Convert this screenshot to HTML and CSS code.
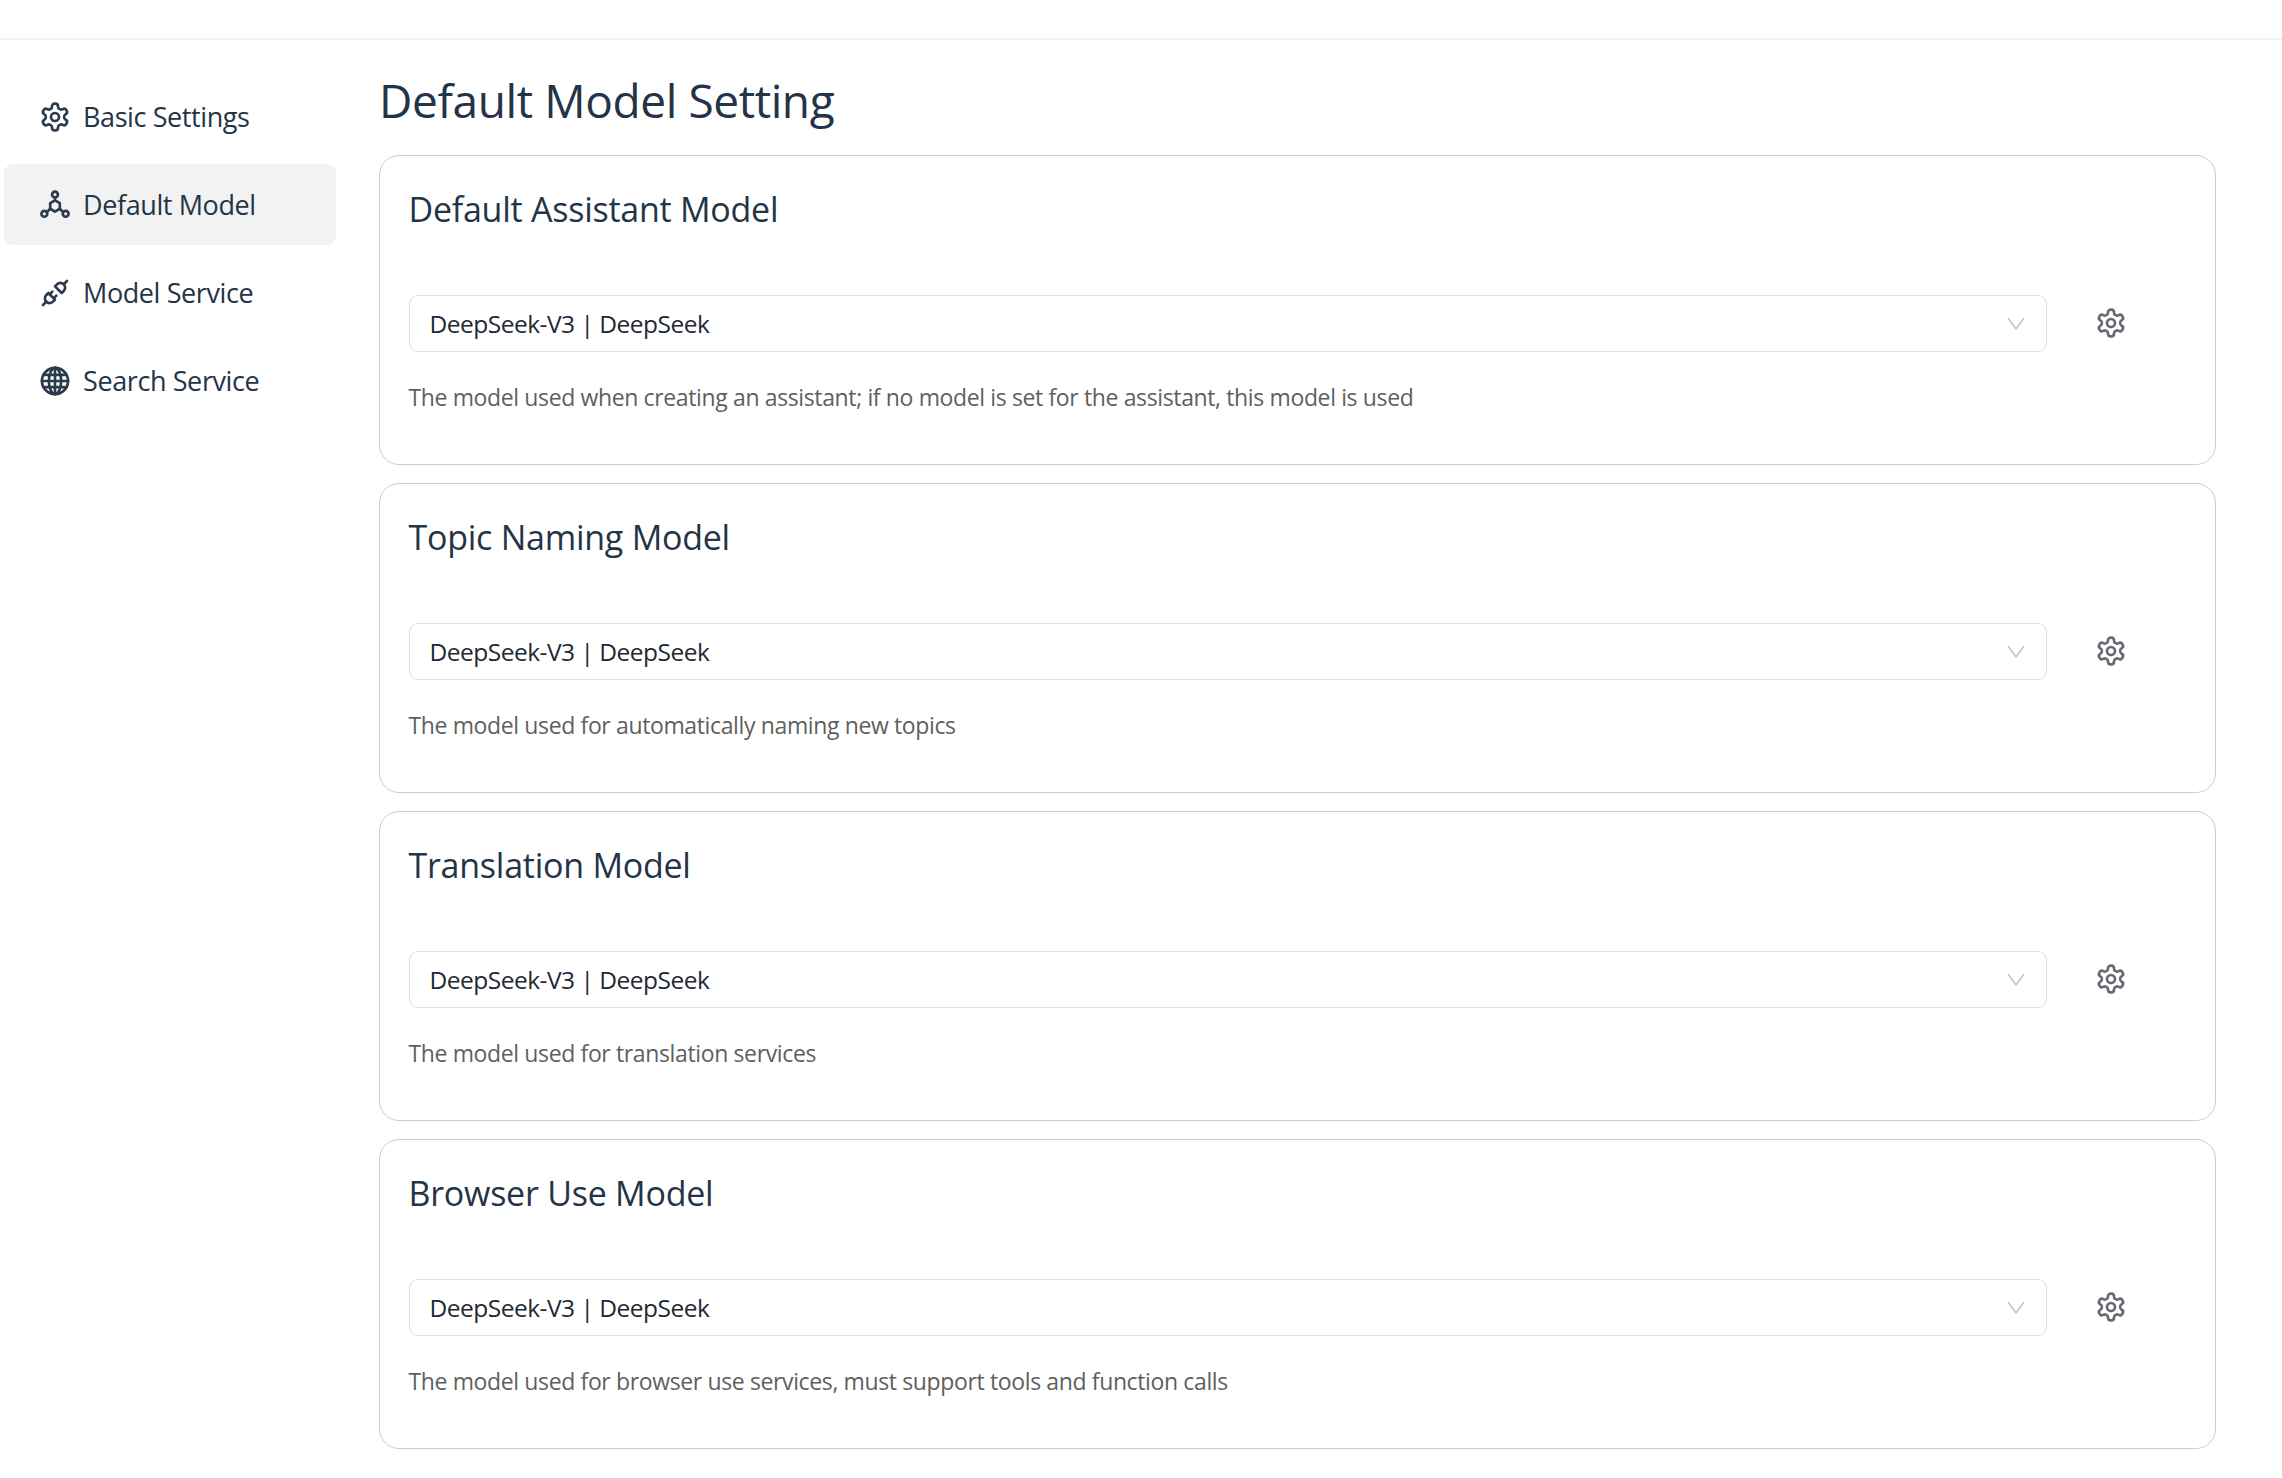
FILE: index.html
```html
<!DOCTYPE html>
<html lang="en">
<head>
<meta charset="utf-8">
<title>Default Model Setting</title>
<link rel="stylesheet" href="styles.css">
</head>
<body>
<svg class="defs" width="0" height="0" aria-hidden="true">
  <symbol id="gear" viewBox="0 0 24 24"><path d="M12.22 2h-.44a2 2 0 0 0-2 2v.18a2 2 0 0 1-1 1.73l-.43.25a2 2 0 0 1-2 0l-.15-.08a2 2 0 0 0-2.73.73l-.22.38a2 2 0 0 0 .73 2.73l.15.1a2 2 0 0 1 1 1.72v.51a2 2 0 0 1-1 1.74l-.15.09a2 2 0 0 0-.73 2.73l.22.38a2 2 0 0 0 2.73.73l.15-.08a2 2 0 0 1 2 0l.43.25a2 2 0 0 1 1 1.73V20a2 2 0 0 0 2 2h.44a2 2 0 0 0 2-2v-.18a2 2 0 0 1 1-1.73l.43-.25a2 2 0 0 1 2 0l.15.08a2 2 0 0 0 2.73-.73l.22-.39a2 2 0 0 0-.73-2.73l-.15-.08a2 2 0 0 1-1-1.74v-.5a2 2 0 0 1 1-1.74l.15-.09a2 2 0 0 0 .73-2.73l-.22-.38a2 2 0 0 0-2.73-.73l-.15.08a2 2 0 0 1-2 0l-.43-.25a2 2 0 0 1-1-1.73V4a2 2 0 0 0-2-2z"/><circle cx="12" cy="12" r="3"/></symbol>
</svg>
<header class="topbar"></header>
<div class="layout">
  <nav class="sidebar">
    <a class="nav-item"><svg class="nav-icon"><use href="#gear"/></svg><span>Basic Settings</span></a>
    <a class="nav-item active"><svg class="nav-icon" viewBox="0 0 24 24"><circle cx="12" cy="4.2" r="2.2"/><circle cx="4" cy="18.6" r="2.2"/><circle cx="20" cy="18.6" r="2.2"/><path d="M12 6.4v2.1M12 8.5l3.6 2.1v4.2L12 16.9l-3.6-2.1v-4.2zM15.6 14.8l2.5 2.6M8.4 14.8l-2.5 2.6"/></svg><span>Default Model</span></a>
    <a class="nav-item"><svg class="nav-icon" viewBox="0 0 24 24"><path d="M7 12l5 5l-1.5 1.5a3.536 3.536 0 1 1 -5 -5z"/><path d="M17 12l-5 -5l1.5 -1.5a3.536 3.536 0 1 1 5 5z"/><path d="M3 21l2.5 -2.5M18.5 5.5l2.5 -2.5M10 11l-2 2M13 14l-2 2"/></svg><span>Model Service</span></a>
    <a class="nav-item"><svg class="nav-icon" viewBox="0 0 24 24"><circle cx="12" cy="12" r="9.8"/><ellipse cx="12" cy="12" rx="4.6" ry="9.8"/><path d="M12 2.2v19.6M2.2 12h19.6M3.5 7.4h17M3.5 16.6h17"/></svg><span>Search Service</span></a>
  </nav>
  <main class="content">
    <h1 class="page-title">Default Model Setting</h1>
    <section class="card">
      <h2 class="card-title">Default Assistant Model</h2>
      <div class="row">
        <div class="select"><span>DeepSeek-V3 | DeepSeek</span><svg class="chevron" viewBox="0 0 18 13"><path d="M1 1l8 11 8-11"/></svg></div>
        <button class="gear-btn"><svg class="gear-icon"><use href="#gear"/></svg></button>
      </div>
      <p class="desc">The model used when creating an assistant; if no model is set for the assistant, this model is used</p>
    </section>
    <section class="card">
      <h2 class="card-title">Topic Naming Model</h2>
      <div class="row">
        <div class="select"><span>DeepSeek-V3 | DeepSeek</span><svg class="chevron" viewBox="0 0 18 13"><path d="M1 1l8 11 8-11"/></svg></div>
        <button class="gear-btn"><svg class="gear-icon"><use href="#gear"/></svg></button>
      </div>
      <p class="desc">The model used for automatically naming new topics</p>
    </section>
    <section class="card">
      <h2 class="card-title">Translation Model</h2>
      <div class="row">
        <div class="select"><span>DeepSeek-V3 | DeepSeek</span><svg class="chevron" viewBox="0 0 18 13"><path d="M1 1l8 11 8-11"/></svg></div>
        <button class="gear-btn"><svg class="gear-icon"><use href="#gear"/></svg></button>
      </div>
      <p class="desc">The model used for translation services</p>
    </section>
    <section class="card">
      <h2 class="card-title">Browser Use Model</h2>
      <div class="row">
        <div class="select"><span>DeepSeek-V3 | DeepSeek</span><svg class="chevron" viewBox="0 0 18 13"><path d="M1 1l8 11 8-11"/></svg></div>
        <button class="gear-btn"><svg class="gear-icon"><use href="#gear"/></svg></button>
      </div>
      <p class="desc">The model used for browser use services, must support tools and function calls</p>
    </section>
  </main>
</div>
</body>
</html>
```
FILE: styles.css
```css
* { box-sizing: border-box; }
html, body { margin: 0; padding: 0; background: #fff; }
body { font-family: "Open Sans", "Noto Sans", sans-serif; color: #243447; height: 1478px; overflow: hidden; }
.defs { position: absolute; }
.topbar { height: 40px; border-bottom: 2px solid #f1f1f1; }
.layout { display: flex; }
.sidebar { width: 379px; padding: 36px 43px 0 4px; display: flex; flex-direction: column; gap: 7px; }
.nav-item { height: 81px; display: flex; align-items: center; gap: 12px; padding-left: 35px; border-radius: 9px; font-size: 27px; letter-spacing: -0.4px; color: #243447; }
.nav-item.active { background: #f2f2f2; }
.nav-icon { width: 32px; height: 32px; flex: none; fill: none; stroke: #2b3a4d; stroke-width: 2; stroke-linecap: round; stroke-linejoin: round; }
.content { width: 1837px; }
.page-title { margin: 0; height: 115px; padding-top: 30px; font-size: 46px; line-height: 60px; font-weight: 400; color: #243447; letter-spacing: -0.4px; }
.card { height: 310px; margin-bottom: 18px; border: 1.5px solid #cdcdcd; border-radius: 20px; padding: 28.5px 28.5px 0; }
.card-title { margin: 0; height: 110px; padding-top: 1px; font-size: 34px; line-height: 47px; font-weight: 400; color: #243447; letter-spacing: -0.25px; }
.row { display: flex; align-items: center; margin-right: 12px; }
.select { flex: 1; height: 57px; border: 1.5px solid #e0e0e0; border-radius: 9px; padding: 0 21px 0 20px; display: flex; align-items: center; justify-content: space-between; font-size: 24.5px; letter-spacing: -0.5px; color: #1f2933; }
.chevron { width: 18px; height: 13px; fill: none; stroke: #c4c4c4; stroke-width: 1.6; }
.gear-btn { width: 128px; height: 57px; padding: 0; border: 0; background: none; display: flex; align-items: center; justify-content: center; }
.gear-icon { width: 32px; height: 32px; fill: none; stroke: #666a72; stroke-width: 2; stroke-linecap: round; stroke-linejoin: round; }
.desc { margin: 27px 0 0; font-size: 23px; line-height: 37px; letter-spacing: -0.37px; color: #5f5f5f; }
```
